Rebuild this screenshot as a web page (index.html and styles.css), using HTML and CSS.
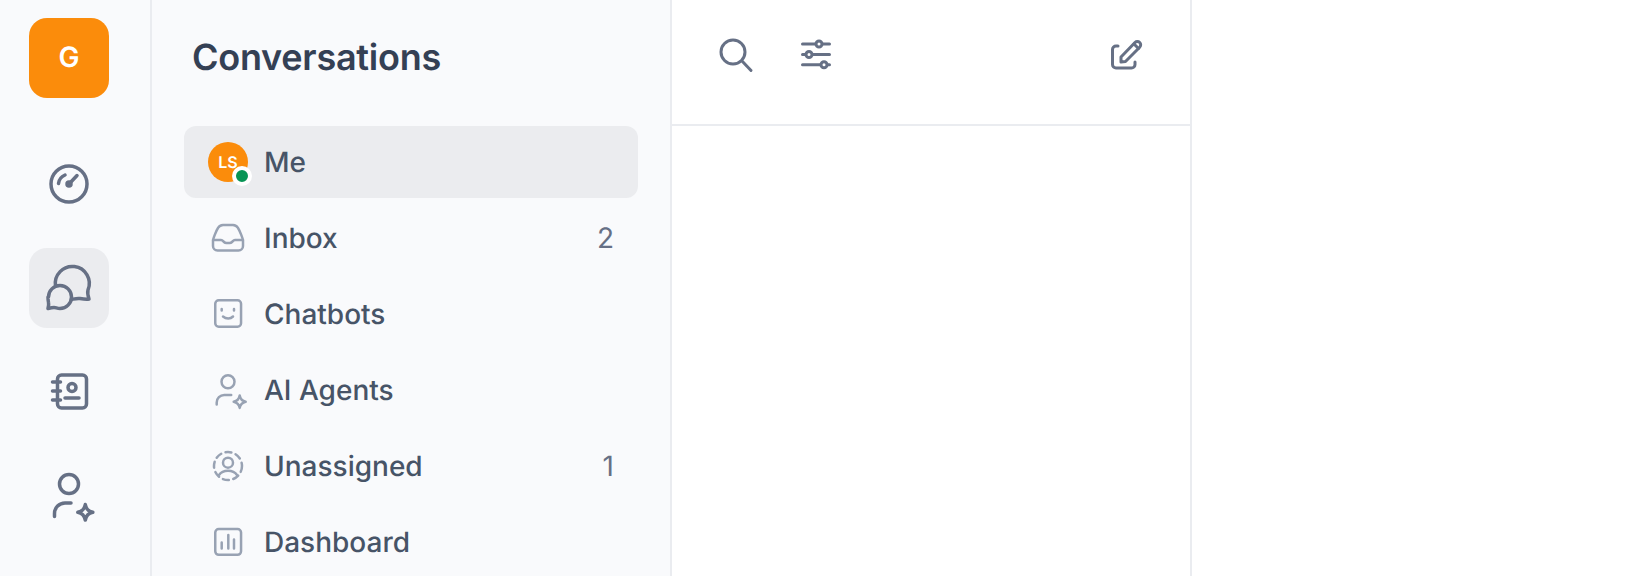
FILE: index.html
```html
<!DOCTYPE html>
<html lang="en">
<head>
<meta charset="utf-8">
<title>Conversations</title>
<link rel="stylesheet" href="styles.css">
</head>
<body>
<div class="app">
  <nav class="rail">
    <div class="logo">G</div>
    <div class="rail-btn first">
      <svg viewBox="0 0 40 40" class="ri"><circle cx="20" cy="20" r="18"/><path d="M9.500 19.500c.5-4 3-7 6.500-8.500"/><path d="M20.500 19.500L28 11.500"/><circle cx="20" cy="20" r="2" class="solid"/></svg>
    </div>
    <div class="rail-btn active">
      <svg viewBox="0 0 48 48" class="ri big"><path d="M10.500 22A17 17 0 1 1 43 26c-.5 2 0 6 1 9-3 .5-6 0-9-.5-3-.5-6 .5-8.500 1"/><path d="M3.500 33A11.500 11.500 0 1 1 15 44.500c-3 0-4-1-6-1s-4 .5-6 1c.5-2 1-4 .5-6-.3-1.500-.5-3.500-.5-5.500z"/></svg>
    </div>
    <div class="rail-btn">
      <svg viewBox="-1.500 0 40 40" class="ri"><rect x="7" y="3" width="29" height="33" rx="4"/><circle cx="21.500" cy="15.500" r="4"/><path d="M14.500 26h14M2 10h8M2 19h8M2 28h8"/></svg>
    </div>
    <div class="rail-btn">
      <svg viewBox="0 0 48 48" class="ri big"><circle cx="24" cy="12" r="9.500"/><path d="M9.500 44.500v-3A10.500 10.500 0 0 1 20 31h6"/><path d="M40.300 32.500c.8 4 3.500 7 7.500 7.800-4 .8-6.700 3.500-7.500 7.800-.8-4.300-3.500-7-7.500-7.800 4-.8 6.700-3.800 7.500-7.800z"/></svg>
    </div>
  </nav>

  <aside class="panel">
    <h1 class="panel-title">Conversations</h1>
    <ul class="menu">
      <li class="item current">
        <span class="ico avatar">LS<span class="dot"></span></span>
        <span class="label">Me</span>
      </li>
      <li class="item">
        <span class="ico"><svg viewBox="0 0 36 36" class="mi"><path d="M3 21C3 19 6 11 8 8a6 6 0 0 1 5-3h10a6 6 0 0 1 5 3c2 3 5 11 5 13v5a4.500 4.500 0 0 1-4.500 4.500h-21A4.500 4.500 0 0 1 3 26z"/><path d="M3 20h8c1.500 0 2 1 3 2 .8.800 1.500 1 2.500 1h3c1 0 1.700-.2 2.500-1 1-1 1.500-2 3-2h8"/></svg></span>
        <span class="label">Inbox</span><span class="count">2</span>
      </li>
      <li class="item">
        <span class="ico"><svg viewBox="0 0 36 36" class="mi"><rect x="5.250" y="4.250" width="25.800" height="26.500" rx="3.500"/><path d="M11.700 13v1.500M24 13v1.500M13 20.500c3 2.500 7.500 2.500 10 0"/></svg></span>
        <span class="label">Chatbots</span>
      </li>
      <li class="item">
        <span class="ico"><svg viewBox="0 0 36 36" class="mi"><circle cx="18" cy="9.700" r="6.500"/><path d="M6.700 32.500v-2A7.500 7.500 0 0 1 14.200 23h7"/><path d="M29.700 23.500c.6 3.500 2.500 5.500 6 6.200-3.500.7-5.400 2.700-6 6.200-.6-3.500-2.500-5.500-6-6.200 3.500-.7 5.400-2.700 6-6.200z"/></svg></span>
        <span class="label">AI Agents</span>
      </li>
      <li class="item">
        <span class="ico"><svg viewBox="0 0 36 36" class="mi"><circle cx="18" cy="18" r="14" stroke-dasharray="6 4.500"/><circle cx="18" cy="14.700" r="5"/><path d="M9 27c2-3 5-4.300 9-4.300s7 1.300 9 4.300"/></svg></span>
        <span class="label">Unassigned</span><span class="count">1</span>
      </li>
      <li class="item">
        <span class="ico"><svg viewBox="0 0 36 36" class="mi"><rect x="5.250" y="5" width="25.800" height="25.800" rx="3.500"/><path d="M11.700 24.500v-6M18.300 24.500V11M24 24.500v-9"/></svg></span>
        <span class="label">Dashboard</span>
      </li>
    </ul>
  </aside>

  <main class="list">
    <header class="toolbar">
      <div class="tools">
        <svg viewBox="0 0 36 36" class="ti"><circle cx="15" cy="15" r="12"/><path d="M24 24l9 9.500"/></svg>
        <svg viewBox="0 0 36 36" class="ti"><path d="M4.500 7h27M4.500 17.500h27M4.500 27.700h27"/><circle cx="21" cy="7" r="3" class="fill"/><circle cx="11" cy="17.500" r="3" class="fill"/><circle cx="26" cy="27.700" r="3" class="fill"/></svg>
      </div>
      <svg viewBox="0 0 36 36" class="ti"><path d="M10 9H8a3.500 3.500 0 0 0-3.500 3.500V27.500A3.500 3.500 0 0 0 8 31h15.500a3.500 3.500 0 0 0 3.500-3.500V25"/><path d="M13 20L27 5.500a3.300 3.300 0 0 1 4.700 0 3.300 3.300 0 0 1 0 4.700L17.500 24.500l-4.500.5z"/><path d="M26 7l4.500 4.500"/></svg>
    </header>
  </main>

  <section class="detail"></section>
</div>
</body>
</html>
```

FILE: styles.css
```css
* { box-sizing: border-box; }
html, body { margin: 0; height: 100%; overflow: hidden; }
body { font-family: Inter, "Liberation Sans", sans-serif; background: #fff; text-rendering: geometricPrecision; }

.app { display: flex; height: 576px; }

.rail {
  width: 152px;
  flex: none;
  background: #f9fafc;
  border-right: 2px solid #eaecf0;
  display: flex;
  flex-direction: column;
  align-items: center;
  padding: 18px 12px 0 0;
}
.logo {
  width: 80px;
  height: 80px;
  border-radius: 18px;
  background: #fb8c0b;
  color: #fff;
  font-size: 28px;
  font-weight: 600;
  display: flex;
  align-items: center;
  justify-content: center;
  padding-bottom: 2px;
}
.rail-btn {
  width: 80px;
  height: 80px;
  flex: none;
  margin-bottom: 24px;
  border-radius: 18px;
  display: flex;
  align-items: center;
  justify-content: center;
}
.rail-btn.first { margin-top: 46px; }
.rail-btn.active { background: #ebecef; }
.ri { width: 40px; height: 40px; fill: none; stroke: #667085; stroke-width: 3.500; stroke-linecap: round; stroke-linejoin: round; overflow: visible; }
.ri.big { width: 48px; height: 48px; }
.ri .solid { fill: #667085; }

.panel {
  width: 520px;
  flex: none;
  background: #f9fafc;
  border-right: 2px solid #eaecf0;
  padding: 0 32px;
}
.panel-title {
  margin: 0;
  height: 126px;
  padding: 36px 0 0 8px;
  color: #344054;
  font-size: 36px;
  line-height: 42px;
  font-weight: 600;
  letter-spacing: -0.25px;
}
.menu { list-style: none; margin: 0; padding: 0; display: flex; flex-direction: column; gap: 4px; }
.item {
  height: 72px;
  border-radius: 12px;
  display: flex;
  align-items: center;
  gap: 16px;
  padding: 0 24px;
  color: #475467;
  font-size: 28px;
  font-weight: 500;
}
.item.current { background: #ebecef; }
.ico { width: 40px; height: 40px; flex: none; display: flex; align-items: center; justify-content: center; position: relative; }
.avatar {
  border-radius: 50%;
  background: #fb8c0b;
  color: #fff;
  font-size: 16px;
  font-weight: 600;
}
.dot {
  position: absolute;
  right: -4px;
  bottom: -4px;
  width: 20px;
  height: 20px;
  border-radius: 50%;
  background: #079455;
  border: 4px solid #fff;
}
.mi { width: 36px; height: 36px; fill: none; stroke: #98a2b3; stroke-width: 2.500; stroke-linecap: round; stroke-linejoin: round; overflow: visible; }
.label { flex: 1; }
.count { color: #667085; font-weight: 400; }

.list { width: 520px; flex: none; border-right: 2px solid #eaecf0; }
.toolbar {
  height: 126px;
  border-bottom: 2px solid #eaecf0;
  display: flex;
  align-items: center;
  justify-content: space-between;
  padding: 0 46px 14px 46px;
}
.tools { display: flex; gap: 44px; }
.ti { width: 36px; height: 36px; fill: none; stroke: #667085; stroke-width: 3; stroke-linecap: round; stroke-linejoin: round; }
.ti .fill { fill: #fff; }

.detail { flex: 1; background: #fff; }
```
